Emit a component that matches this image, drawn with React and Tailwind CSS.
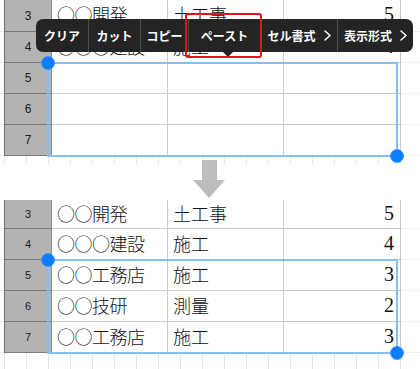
import React from 'react';

// Spreadsheet rows shown before and after the paste
const BEFORE = [
  { n: 3, a: '○○開発', b: '土工事', c: '5', h: 'h-[32px]' },
  { n: 4, a: '○○○建設', b: '施工', c: '4', h: 'h-[31px]' },
  { n: 5, a: '', b: '', c: '', h: 'h-[31px]' },
  { n: 6, a: '', b: '', c: '', h: 'h-[31px]' },
  { n: 7, a: '', b: '', c: '', h: 'h-[31px]' },
];

const AFTER = [
  { n: 3, a: '○○開発', b: '土工事', c: '5', h: 'h-[29px]' },
  { n: 4, a: '○○○建設', b: '施工', c: '4', h: 'h-[31px]' },
  { n: 5, a: '○○工務店', b: '施工', c: '3', h: 'h-[31px]' },
  { n: 6, a: '○○技研', b: '測量', c: '2', h: 'h-[31px]' },
  { n: 7, a: '○○工務店', b: '施工', c: '3', h: 'h-[31px]' },
];

const jpFont = { fontFamily: '"Noto Sans CJK JP", "Liberation Serif", serif' };
const numFont = { fontFamily: '"Liberation Serif", serif' };

// One spreadsheet row: faint margin, gray row header, three cells, faint trailing area
const Row = ({ row, small }) => (
  <div className={`flex ${row.h}`}>
    <div className="w-[4px] border-b border-[#ececec]" />
    <div
      className={`w-[48px] flex items-center justify-center bg-[#b3b3b3] border-l border-b border-r border-l-[#707070] border-b-[#7a7a7a] border-r-[#8c8c8c] text-[#1c1c1c] ${small ? 'text-[11px]' : 'text-[12px]'}`}
      style={{ fontFamily: '"Liberation Sans", Arial, sans-serif' }}
    >
      {row.n}
    </div>
    <div className="w-[116px] flex items-center pl-[5px] pb-[2px] border-r border-b border-[#cdcdcd] text-[18px] font-light text-[#111] whitespace-nowrap overflow-hidden tracking-[-0.5px]" style={jpFont}>
      {row.a}
    </div>
    <div className="w-[116px] flex items-center pl-[5px] pb-[2px] border-r border-b border-[#cdcdcd] text-[18px] font-light text-[#111] whitespace-nowrap overflow-hidden" style={jpFont}>
      {row.b}
    </div>
    <div className="w-[117px] flex items-center justify-end pr-[6px] pb-[3px] border-r border-b border-[#c4c4c4] text-[20px] text-[#111]" style={numFont}>
      {row.c}
    </div>
    <div className="flex-1 border-b border-[#efefef]" />
  </div>
);

// Blue selection frame with the two drag handles
const Selection = ({ children }) => (
  <div className="relative">
    {children}
    <div className="absolute left-[47px] w-[351px] -top-[1px] -bottom-[1px] border-2 border-[#86bff7] pointer-events-none">
      <div className="absolute -left-[8px] -top-[8px] w-[14px] h-[14px] rounded-full bg-[#0b7cff] border border-[#3d97ff]" />
      <div className="absolute -right-[8px] -bottom-[8px] w-[14px] h-[14px] rounded-full bg-[#0b7cff] border border-[#3d97ff]" />
    </div>
  </div>
);

const Sheet = ({ rows, small }) => (
  <div className="flex flex-col">
    {rows.slice(0, 2).map((r) => <Row key={r.n} row={r} small={small} />)}
    <Selection>
      {rows.slice(2).map((r) => <Row key={r.n} row={r} small={small} />)}
    </Selection>
  </div>
);

// Faint tick marks below a sheet
const Ticks = ({ h }) => (
  <div className={`flex pl-[4px] ${h}`}>
    {[...Array(19)].map((_, i) => <div key={i} className="w-[22px] shrink-0 border-l border-[#e6e6e6]" />)}
  </div>
);

const Chevron = () => (
  <svg width="7" height="11" viewBox="0 0 7 11" className="ml-[8px]">
    <polyline points="1,1 6,5.5 1,10" fill="none" stroke="white" strokeWidth="1.5" strokeLinecap="round" strokeLinejoin="round" />
  </svg>
);

// Popup edit menu over the top sheet
const EditMenu = () => {
  const items = [
    { label: 'クリア', w: 'w-[52px]' },
    { label: 'カット', w: 'w-[52px]' },
    { label: 'コピー', w: 'w-[48px]' },
    { label: 'ペースト', w: 'w-[72px]' },
    { label: 'セル書式', w: 'w-[77px]', more: true },
    { label: '表示形式', w: 'w-[76px]', more: true },
  ];
  return (
    <div className="absolute left-[36px] top-[19px] h-[33px] flex bg-[#242424] rounded-[7px]" style={{ fontFamily: '"Noto Sans CJK JP", sans-serif' }}>
      {items.map((it, i) => (
        <div
          key={it.label}
          className={`${it.w} flex items-center justify-center text-white text-[12px] font-bold ${i > 0 ? 'border-l border-[#4e4e4e]' : ''}`}
        >
          {it.label}
          {it.more && <Chevron />}
        </div>
      ))}
      {/* pointer under ペースト */}
      <div className="absolute left-[187px] top-[33px] w-0 h-0 border-l-[5px] border-r-[5px] border-t-[5px] border-l-transparent border-r-transparent border-t-[#242424]" />
    </div>
  );
};

const DownArrow = () => (
  <svg width="32" height="38" viewBox="0 0 32 38" className="-mt-[5px] ml-[193px] mb-[2px]">
    <rect x="9" y="0" width="15" height="20" fill="#bdbdbd" />
    <polygon points="0,20 32,20 16,38" fill="#bdbdbd" />
  </svg>
);

export default function App() {
  return (
    <div className="relative w-[420px] h-[369px] bg-white overflow-hidden">
      <Sheet rows={BEFORE} />
      <Ticks h="h-[9px]" />
      <DownArrow />
      <Sheet rows={AFTER} small />
      <Ticks h="h-[16px]" />
      <EditMenu />
      {/* red highlight around the paste button */}
      <div className="absolute left-[185px] top-[13px] w-[77px] h-[45px] border-2 border-[#e3121b] rounded-[3px] pointer-events-none" />
    </div>
  );
}
